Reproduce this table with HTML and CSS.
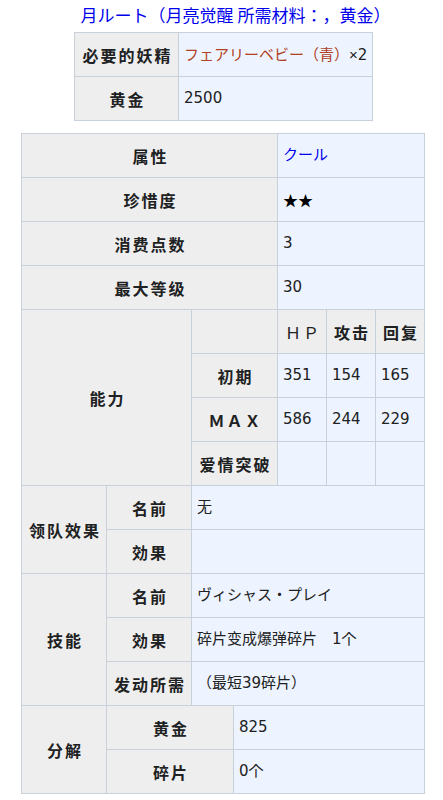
FILE: index.html
```html
<!DOCTYPE html>
<html>
<head>
    <meta charset="utf-8">
    <title>月ルート</title>
    <link rel="stylesheet" href="styles.css">
</head>
<body>

    <div class="caption"><a href="#">月ルート（月亮觉醒 所需材料：，黄金）</a></div>

    <!-- materials -->
    <div class="cost">
        <div class="th">必要的妖精</div>
        <div class="td"><a class="new" href="#">フェアリーベビー（青）</a><span class="mult">×</span>2</div>
        <div class="th">黄金</div>
        <div class="td">2500</div>
    </div>

    <!-- fairy stats -->
    <div class="stats">
        <div class="th c4">属性</div>
        <div class="td c3"><a href="#">クール</a></div>

        <div class="th c4">珍惜度</div>
        <div class="td c3 stars">★★</div>

        <div class="th c4">消费点数</div>
        <div class="td c3">3</div>

        <div class="th c4">最大等级</div>
        <div class="td c3">30</div>

        <div class="th c2 r4">能力</div>
        <div class="th c2"></div>
        <div class="th thin">ＨＰ</div>
        <div class="th">攻击</div>
        <div class="th">回复</div>

        <div class="th c2">初期</div>
        <div class="td">351</div>
        <div class="td">154</div>
        <div class="td">165</div>

        <div class="th c2">ＭＡＸ</div>
        <div class="td">586</div>
        <div class="td">244</div>
        <div class="td">229</div>

        <div class="th c2">爱情突破</div>
        <div class="td"></div>
        <div class="td"></div>
        <div class="td"></div>

        <div class="th r2">领队效果</div>
        <div class="th">名前</div>
        <div class="td c5">无</div>
        <div class="th">効果</div>
        <div class="td c5"></div>

        <div class="th r3">技能</div>
        <div class="th">名前</div>
        <div class="td c5">ヴィシャス・プレイ</div>
        <div class="th">効果</div>
        <div class="td c5">碎片变成爆弹碎片　1个</div>
        <div class="th">发动所需</div>
        <div class="td c5">（最短39碎片）</div>

        <div class="th r2">分解</div>
        <div class="th c2">黄金</div>
        <div class="td c4">825</div>
        <div class="th c2">碎片</div>
        <div class="td c4">0个</div>
    </div>

</body>
</html>
```

FILE: styles.css
```css
body {
    margin: 0;
    font-family: "Noto Sans CJK SC", "Noto Sans CJK JP", sans-serif;
    color: #202122;
    background-color: #fff;
    text-spacing-trim: space-all;
}

a {
    color: #0000ee;
    text-decoration: none;
}

a.new {
    color: #b0401e;
}

.caption {
    height: 32px;
    line-height: 30px;
    font-family: "Noto Sans CJK JP", sans-serif;
    font-size: 17px;
    text-align: center;
    padding-left: 28px;
}

.cost,
.stats {
    display: grid;
    gap: 1px;
    padding: 1px;
    background-color: #c8d0dc;
}

.cost {
    width: 297px;
    margin-left: 74px;
    grid-template-columns: 103px 193px;
    grid-auto-rows: 43px;
}

.stats {
    width: 402px;
    margin-left: 21px;
    margin-top: 12px;
    grid-template-columns: 84px 84px 41px 43px 48px 48px 48px;
    grid-auto-rows: 43px;
}

.th {
    display: flex;
    align-items: center;
    justify-content: center;
    line-height: 1;
    background-color: #eeeeee;
    font-weight: bold;
    font-size: 16px;
    letter-spacing: 2px;
    padding-left: 2px;
}

.th.thin {
    font-weight: normal;
}

.td {
    line-height: 43px;
    white-space: nowrap;
    overflow: hidden;
    background-color: #eef4ff;
    font-family: "DejaVu Sans", "Noto Sans CJK JP", sans-serif;
    font-size: 15px;
    padding-left: 5px;
}

.td .mult {
    font-family: "Liberation Sans", sans-serif;
}

.td.stars {
    font-family: "Noto Sans CJK JP", sans-serif;
    color: #000;
}

.c2 { grid-column: span 2; }
.c3 { grid-column: span 3; }
.c4 { grid-column: span 4; }
.c5 { grid-column: span 5; }
.r2 { grid-row: span 2; }
.r3 { grid-row: span 3; }
.r4 { grid-row: span 4; }
```
